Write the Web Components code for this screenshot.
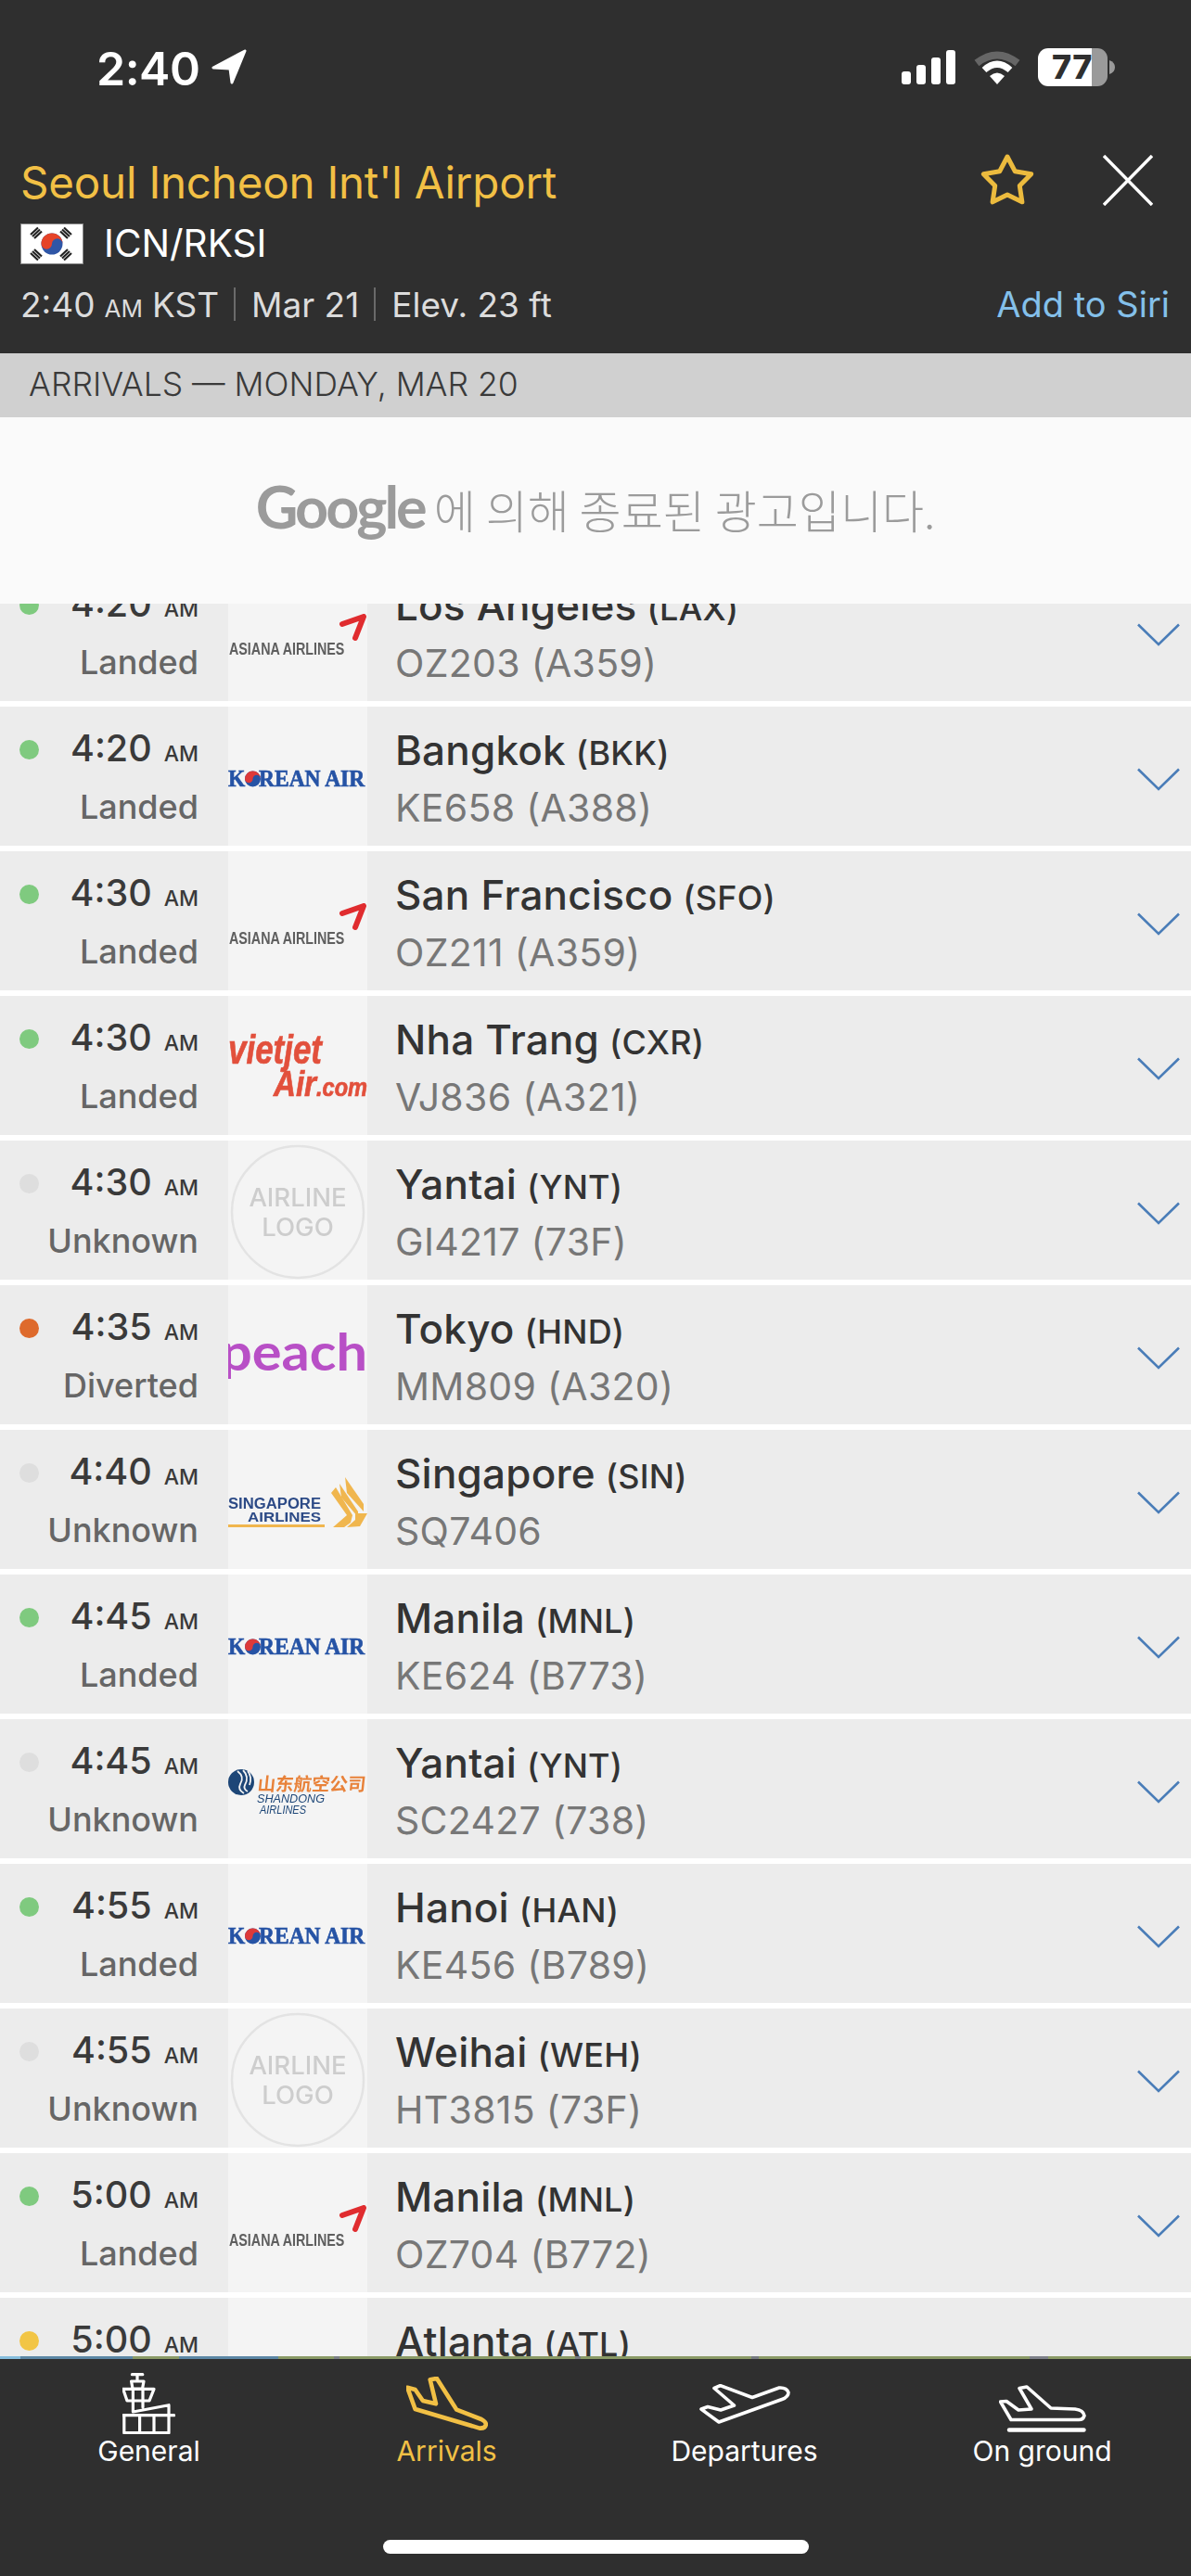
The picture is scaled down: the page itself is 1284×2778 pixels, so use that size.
<!DOCTYPE html>
<html>
<head>
<meta charset="utf-8">
<title>Seoul Incheon Int'l Airport</title>
<style>
  html, body { margin: 0; padding: 0; background: #fff; }
  body { font-family: Inter, "Noto Sans", sans-serif; }
  tab-item svg { display: block; fill: none; stroke: currentColor; stroke-linejoin: round; stroke-linecap: round; }
</style>
</head>
<body>
<airport-app>
  <airport-header slot="header"></airport-header>
  <section-band slot="band">ARRIVALS — MONDAY, MAR 20</section-band>
  <flight-list slot="list">
    <flight-row time="4:20" status="Landed" dot="#7fca7f" city="Los Angeles" code="(LAX)" flight="OZ203 (A359)" logo="asiana"></flight-row>
    <flight-row time="4:20" status="Landed" dot="#7fca7f" city="Bangkok" code="(BKK)" flight="KE658 (A388)" logo="korean"></flight-row>
    <flight-row time="4:30" status="Landed" dot="#7fca7f" city="San Francisco" code="(SFO)" flight="OZ211 (A359)" logo="asiana"></flight-row>
    <flight-row time="4:30" status="Landed" dot="#7fca7f" city="Nha Trang" code="(CXR)" flight="VJ836 (A321)" logo="vietjet"></flight-row>
    <flight-row time="4:30" status="Unknown" dot="#dedede" city="Yantai" code="(YNT)" flight="GI4217 (73F)" logo="none"></flight-row>
    <flight-row time="4:35" status="Diverted" dot="#de6a2c" city="Tokyo" code="(HND)" flight="MM809 (A320)" logo="peach"></flight-row>
    <flight-row time="4:40" status="Unknown" dot="#dedede" city="Singapore" code="(SIN)" flight="SQ7406" logo="singapore"></flight-row>
    <flight-row time="4:45" status="Landed" dot="#7fca7f" city="Manila" code="(MNL)" flight="KE624 (B773)" logo="korean"></flight-row>
    <flight-row time="4:45" status="Unknown" dot="#dedede" city="Yantai" code="(YNT)" flight="SC2427 (738)" logo="shandong"></flight-row>
    <flight-row time="4:55" status="Landed" dot="#7fca7f" city="Hanoi" code="(HAN)" flight="KE456 (B789)" logo="korean"></flight-row>
    <flight-row time="4:55" status="Unknown" dot="#dedede" city="Weihai" code="(WEH)" flight="HT3815 (73F)" logo="none"></flight-row>
    <flight-row time="5:00" status="Landed" dot="#7fca7f" city="Manila" code="(MNL)" flight="OZ704 (B772)" logo="asiana"></flight-row>
    <flight-row time="5:00" status="" dot="#f2c545" city="Atlanta" code="(ATL)" flight="" logo=""></flight-row>
  </flight-list>
  <tab-bar slot="tabs">
    <tab-item label="General">
      <svg width="57" height="66" viewBox="0 0 57 66" stroke-width="3.2">
        <path d="M10.4 1.7H21.8M16 1.7V8M9.6 9H23L21.5 17H11ZM.7 17.3H34L29 30H5ZM11.4 17.3V42M22 17.3V37M11.4 30V42L50 34.7V64.7H1.8V45.7M.7 45.7H55.5M18.6 45.7V64.7M34 45.7V64.7"/>
      </svg>
    </tab-item>
    <tab-item label="Arrivals" active offset="4">
      <svg width="88" height="58" viewBox="0 0 88 58" stroke-width="4.6">
        <path d="M1.2 11.7L9.6 14L17.9 26L32 29.3L25.7 3.3L32.9 1.9L54.3 35.7L81 46Q86.4 49 85.8 52Q85 56 79 55.6L9.6 35Z"/>
      </svg>
    </tab-item>
    <tab-item label="Departures" offset="12">
      <svg width="98" height="43" viewBox="0 0 98 43" stroke-width="3.6">
        <path d="M16 4.5L22.5 1.6L57 14.5L86 4Q94 3.5 96 9Q96 14 89 16.5L21 41L2 27L9 24.5L23 28L37.5 23Z"/>
      </svg>
    </tab-item>
    <tab-item label="On ground" offset="13">
      <svg width="94" height="52" viewBox="0 0 94 52" stroke-width="3.6">
        <path d="M1.5 18L8 17.5L21 27L35 26L22 3.5L30 2L56 25L82 26Q91 27 92 33Q91 37.5 86 37.5H13Z"/>
        <path d="M11 48.5H91.5" stroke-width="4.4"/>
      </svg>
    </tab-item>
  </tab-bar>
</airport-app>

<script>
  // Page frame: header, band, scrolling list and the tab bar
  class AirportApp extends HTMLElement {
    constructor() {
      super();
      this.attachShadow({ mode: 'open' });
      this.shadowRoot.innerHTML = `
        <style>
          :host { display: flex; flex-direction: column; width: 1284px; height: 2778px; overflow: hidden; }
          .list { flex: 1; min-height: 0; overflow: hidden; position: relative; }
        </style>
        <slot name="header"></slot>
        <slot name="band"></slot>
        <div class="list">
          <slot name="list"></slot>
          <ad-banner></ad-banner>
        </div>
        <slot name="tabs"></slot>
      `;
    }
  }

  class AirportHeader extends HTMLElement {
    constructor() {
      super();
      this.attachShadow({ mode: 'open' });
      this.shadowRoot.innerHTML = `
        <style>
          :host { display: block; background: #2f2f2f; height: 381px; color: #fff; font-family: Inter, sans-serif; }
          .status { display: flex; height: 160px; box-sizing: border-box; padding: 44px 82px 0 104px; align-items: flex-start; }
          .clock { font-size: 50px; font-weight: 600; line-height: 60px; letter-spacing: -.5px; }
          .arrow { margin: 8px 0 0 12px; }
          .signal { margin: 10px 0 0 auto; }
          .wifi { margin: 10px 0 0 20px; }
          .battery { margin: 8px 0 0 19px; width: 75px; height: 41px; border-radius: 11px; background: linear-gradient(90deg, #fff 77.5%, #9a9a9a 77.5%);
                     color: #2f2f2f; font-size: 36px; font-weight: 800; line-height: 41px; text-align: left; padding-left: 15px; box-sizing: border-box; letter-spacing: .5px; }
          .tip { margin: 21px 0 0 2px; }
          .top { display: flex; height: 79px; padding: 0 41px 0 22px; }
          .title { color: #f2c045; font-size: 47.5px; line-height: 54px; margin-top: 10px; flex: 1; letter-spacing: -.2px; }
          .star { margin: 5px 73px 0 0; }
          .close { margin: 7px 0 0 0; }
          .code { display: flex; padding-left: 22px; height: 68px; font-size: 40.5px; line-height: 48px; }
          .code svg { margin: 2px 22px 0 0; }
          .meta { display: flex; align-items: baseline; padding: 0 23px 0 22px; color: #dcdcdc; font-size: 37px; line-height: 42px; }
          .meta small { font-size: 26px; margin: 0 10px; }
          .sep { width: 2px; height: 36px; background: #6a6a6a; margin: 3px 17px 0 16px; align-self: flex-start; }
          .siri { margin-left: auto; color: #84c0ea; font-size: 38px; }
        </style>
        <div class="status">
          <span class="clock">2:40</span>
          <svg class="arrow" width="40" height="40" viewBox="0 0 40 40"><path d="M37 3L3 21L21 22L23 37Z" fill="#fff" stroke="#fff" stroke-width="3" stroke-linejoin="round"/></svg>
          <svg class="signal" width="58" height="37" viewBox="0 0 58 37" fill="#fff">
            <rect x="0" y="23" width="10" height="14" rx="3"/><rect x="16" y="16" width="10" height="21" rx="3"/>
            <rect x="32" y="8" width="10" height="29" rx="3"/><rect x="48" y="0" width="10" height="37" rx="3"/>
          </svg>
          <svg class="wifi" width="50" height="37" viewBox="0 0 50 37" fill="none">
            <path d="M3 14Q25 -3 47 14" stroke="#666" stroke-width="8"/>
            <path d="M11 21.500Q25 9 39 21.500" stroke="#fff" stroke-width="7"/>
            <path d="M17 28Q25 21 33 28L25 37Z" fill="#fff"/>
          </svg>
          <div class="battery">77</div>
          <svg class="tip" width="6" height="15" viewBox="0 0 6 15"><path d="M0 0Q6 2 6 7.500Q6 13 0 15Z" fill="#9a9a9a"/></svg>
        </div>
        <div class="top">
          <div class="title">Seoul Incheon Int'l Airport</div>
          <svg class="star" width="60" height="60" viewBox="0 0 60 60"><path d="M30 4L38.200 19.700L55.700 22.700L43.300 35.300L45.900 52.800L30 45L14.100 52.800L16.700 35.300L4.300 22.700L21.800 19.700Z" fill="none" stroke="#ecbb3e" stroke-width="5" stroke-linejoin="round"/></svg>
          <svg class="close" width="54" height="55" viewBox="0 0 54 55"><path d="M1 1L53 54M53 1L1 54" stroke="#fff" stroke-width="3.4"/></svg>
        </div>
        <div class="code">
          <svg width="68" height="44" viewBox="0 0 68 44">
            <rect x=".5" y=".5" width="67" height="43" fill="#fff" stroke="#888"/>
            <circle cx="34" cy="22" r="11.500" fill="#2f56a6"/>
            <path d="M22.500 22A11.500 11.500 0 0 1 45.500 22A5.750 5.750 0 0 0 34 22A5.750 5.750 0 0 1 22.500 22Z" fill="#e64328"/>
            <g stroke="#222" stroke-width="2.200">
              <path d="M11 12L19 4.500M13 14L21 6.500M15 16L23 8.500"/>
              <path d="M47 4.500L55 12M45 6.500L53 14M43 8.500L51 16"/>
              <path d="M11 32L19 39.500M13 30L21 37.500M15 28L23 35.500"/>
              <path d="M55 32L47 39.500M53 30L45 37.500M51 28L43 35.500"/>
            </g>
          </svg>
          <span>ICN/RKSI</span>
        </div>
        <div class="meta">
          <span>2:40<small>AM</small>KST</span><i class="sep"></i><span>Mar 21</span><i class="sep"></i><span>Elev. 23 ft</span>
          <span class="siri">Add to Siri</span>
        </div>
      `;
    }
  }

  class SectionBand extends HTMLElement {
    constructor() {
      super();
      this.attachShadow({ mode: 'open' });
      this.shadowRoot.innerHTML = `
        <style>
          :host { display: block; height: 69px; box-sizing: border-box; background: #d0d0d0; color: #3a3a3a; padding: 13px 0 0 31px;
                  font-family: Inter, sans-serif; font-size: 35.5px; line-height: 42px; font-weight: 300; }
        </style>
        <slot></slot>
      `;
    }
  }

  class AdBanner extends HTMLElement {
    constructor() {
      super();
      this.attachShadow({ mode: 'open' });
      this.shadowRoot.innerHTML = `
        <style>
          :host { position: absolute; left: 0; top: 0; right: 0; height: 191px; padding-bottom: 10px; background: #fafafa; display: flex; justify-content: center;
                  align-items: center; color: #9b9b9b; font-family: "Noto Sans CJK KR", sans-serif; font-size: 49px; font-weight: 300; }
          b { font-family: Lato, sans-serif; font-weight: 700; font-size: 63px; letter-spacing: -3px; margin-right: 10px; }
          div { display: flex; align-items: baseline; }
        </style>
        <div><b>Google</b><span>에 의해 종료된 광고입니다.</span></div>
      `;
    }
  }

  class FlightList extends HTMLElement {
    constructor() {
      super();
      this.attachShadow({ mode: 'open' });
      this.shadowRoot.innerHTML = `
        <style>
          :host { display: flex; flex-direction: column; gap: 6px; padding-top: 156px; background: #fff; }
        </style>
        <slot></slot>
      `;
    }
  }

  // Logos are redrawn as svg with real text, sized to the 150x150 logo cell
  const LOGOS = {
    asiana: `<text transform="translate(1 100) scale(1 1.22)" font-family="Liberation Sans" font-weight="700" font-size="14.300" fill="#5f5f5f">ASIANA AIRLINES</text>
      <path d="M123 67L146 59L137 82" fill="none" stroke="#e02c2f" stroke-width="6" stroke-linecap="round" stroke-linejoin="round"/>`,
    korean: `<g font-family="Liberation Serif" font-weight="700" fill="#2653a5" stroke="#2653a5" stroke-width=".6">
        <text transform="translate(0 86) scale(1 1.06)" font-size="23.500">K</text>
        <text transform="translate(33 86) scale(1 1.06)" font-size="23.500">REAN AIR</text>
      </g>
      <circle cx="26.500" cy="78" r="8.500" fill="#2653a5"/>
      <path d="M18 78A8.500 8.500 0 0 1 35 78A4.250 4.250 0 0 0 26.500 78A4.250 4.250 0 0 1 18 78Z" fill="#dd3a3a"/>`,
    vietjet: `<g font-family="Liberation Sans" font-weight="700" font-style="italic" fill="#e2503c" stroke="#e2503c" stroke-width=".7">
        <text x="0" y="73" font-size="45" textLength="101" lengthAdjust="spacingAndGlyphs">vietjet</text>
        <text x="49" y="108" font-size="38" textLength="46" lengthAdjust="spacingAndGlyphs">Air</text>
        <text x="95" y="108" font-size="27" textLength="55" lengthAdjust="spacingAndGlyphs">.com</text>
      </g>`,
    peach: `<text x="-8" y="92" font-family="Lato" font-weight="700" font-size="56" fill="#b84fc6" textLength="158" lengthAdjust="spacingAndGlyphs">peach</text>`,
    singapore: `<g font-family="Liberation Sans" font-weight="700" fill="#2c4a86">
        <text x="0" y="85" font-size="16" textLength="100" lengthAdjust="spacingAndGlyphs">SINGAPORE</text>
        <text x="21" y="99" font-size="14" textLength="79" lengthAdjust="spacingAndGlyphs">AIRLINES</text>
      </g>
      <rect x="0" y="102" width="104" height="3" fill="#f0b64e"/>
      <g fill="#f0b64e">
        <path d="M126 51L146 80L146 88L128 68Z"/><path d="M120 58L140 88V94L122 73Z"/><path d="M111 68L116 62L134 92L132 100L125 105H113L128 92Z"/>
        <path d="M137 90H150L142 104L128 105L137 97Z"/>
      </g>`,
    shandong: `<circle cx="14" cy="68" r="14" fill="#1d4677"/>
      <path d="M10 56Q18 62 13 70Q10 76 17 80M16 55Q23 62 18 71Q16 75 21 78M21 56Q26 62 23 71" fill="none" stroke="#f4f4f4" stroke-width="1.800"/>
      <text x="31" y="77" font-family="Noto Sans CJK SC" font-weight="700" font-size="19.500" fill="#e8823a" transform="skewX(-6) translate(8 0)">山东航空公司</text>
      <g font-family="Liberation Sans" font-style="italic" fill="#1d4677">
        <text x="31" y="90" font-size="13.500" textLength="73" lengthAdjust="spacingAndGlyphs">SHANDONG</text>
        <text x="34" y="102" font-size="13" textLength="50" lengthAdjust="spacingAndGlyphs">AIRLINES</text>
      </g>`,
    none: `<circle cx="75" cy="77" r="71" fill="none" stroke="#e3e3e3" stroke-width="2.500"/>
      <g font-family="Inter" font-weight="500" font-size="27.500" fill="#cdcdcd" text-anchor="middle">
        <text x="75" y="71">AIRLINE</text><text x="75" y="103">LOGO</text>
      </g>`
  };

  class AirlineLogo extends HTMLElement {
    connectedCallback() {
      const root = this.shadowRoot || this.attachShadow({ mode: 'open' });
      const art = LOGOS[this.getAttribute('kind')] || '';
      root.innerHTML = `
        <style>
          :host { display: block; width: 150px; height: 150px; background: #f4f4f4; overflow: hidden; }
          svg { display: block; filter: blur(.4px); }
        </style>
        <svg width="150" height="150" viewBox="0 0 150 150">${art}</svg>
      `;
    }
  }

  class FlightRow extends HTMLElement {
    connectedCallback() {
      const root = this.shadowRoot || this.attachShadow({ mode: 'open' });
      const attr = name => this.getAttribute(name) || '';
      root.innerHTML = `
        <style>
          :host { display: grid; grid-template-columns: 246px 150px 1fr; height: 150px; flex: none; background: #ececec; font-family: Inter, sans-serif; }
          .when { padding: 22px 32px 0 21px; }
          .line { display: flex; height: 46px; color: #3a3a3a; font-size: 39.5px; line-height: 46px; font-weight: 500; }
          .dot { width: 21px; height: 21px; border-radius: 50%; margin-top: 14px; background: ${attr('dot')}; }
          .time { margin-left: auto; }
          .time small { font-size: 23px; font-weight: 500; margin-left: 13px; }
          .status { margin-top: 18px; text-align: right; color: #666; font-size: 36px; line-height: 44px; font-weight: 500; }
          .what { display: flex; padding: 20px 0 0 30px; }
          .text { flex: 1; }
          .city { color: #333; font-size: 44px; line-height: 54px; font-weight: 500; white-space: nowrap; letter-spacing: .2px; }
          .city small { font-size: 36px; font-weight: 500; margin-left: -1px; }
          .flight { margin-top: 8px; color: #777; font-size: 41px; line-height: 48px; font-weight: 400; letter-spacing: .3px; }
          svg { margin: 46px 12px 0 0; }
        </style>
        <div class="when">
          <div class="line"><i class="dot"></i><span class="time">${attr('time')}<small>AM</small></span></div>
          <div class="status">${attr('status')}</div>
        </div>
        <airline-logo kind="${attr('logo')}"></airline-logo>
        <div class="what">
          <div class="text">
            <div class="city">${attr('city')} <small>${attr('code')}</small></div>
            <div class="flight">${attr('flight')}</div>
          </div>
          <svg width="46" height="25" viewBox="0 0 46 25"><path d="M1 1.500L23 23L45 1.500" fill="none" stroke="#4a7db8" stroke-width="2.600"/></svg>
        </div>
      `;
    }
  }

  class TabBar extends HTMLElement {
    constructor() {
      super();
      this.attachShadow({ mode: 'open' });
      this.shadowRoot.innerHTML = `
        <style>
          :host { display: block; height: 237px; flex: none; background: #2f2f2f; position: relative; }
          .map { height: 3px; background: linear-gradient(90deg, #86bedd 0 22px, #5c87a5 22px 143px, #8a9a66 143px 193px, #5c87a5 193px 300px, #8a9a66 300px 360px,
                   #7b7f86 360px 366px, #8a9a66 366px 620px, #767a80 620px 626px, #8a9a66 626px 810px, #767a80 810px 818px, #8a9a66 818px 1110px, #7d8088 1110px 1130px, #8a9a66 1130px); }
          .tabs { display: grid; grid-template-columns: repeat(4, 1fr); }
          .home { position: absolute; left: 413px; top: 198px; width: 459px; height: 15px; border-radius: 8px; background: #fff; }
        </style>
        <div class="map"></div>
        <div class="tabs"><slot></slot></div>
        <div class="home"></div>
      `;
    }
  }

  class TabItem extends HTMLElement {
    constructor() {
      super();
      this.attachShadow({ mode: 'open' });
    }
    connectedCallback() {
      const offset = this.getAttribute('offset') || 0;
      this.shadowRoot.innerHTML = `
        <style>
          :host { display: flex; flex-direction: column; align-items: center; padding-top: 15px; color: #fff; font-family: Inter, sans-serif; }
          :host([active]) { color: #f2c045; }
          .icon { height: 66px; box-sizing: border-box; padding-top: ${offset}px; }
          .label { font-size: 30px; line-height: 36px; font-weight: 400; }
        </style>
        <div class="icon"><slot></slot></div>
        <div class="label">${this.getAttribute('label')}</div>
      `;
    }
  }

  // Children first so the shadow markup can use them straight away
  customElements.define('airline-logo', AirlineLogo);
  customElements.define('ad-banner', AdBanner);
  customElements.define('flight-row', FlightRow);
  customElements.define('flight-list', FlightList);
  customElements.define('section-band', SectionBand);
  customElements.define('airport-header', AirportHeader);
  customElements.define('tab-item', TabItem);
  customElements.define('tab-bar', TabBar);
  customElements.define('airport-app', AirportApp);
</script>
</body>
</html>
